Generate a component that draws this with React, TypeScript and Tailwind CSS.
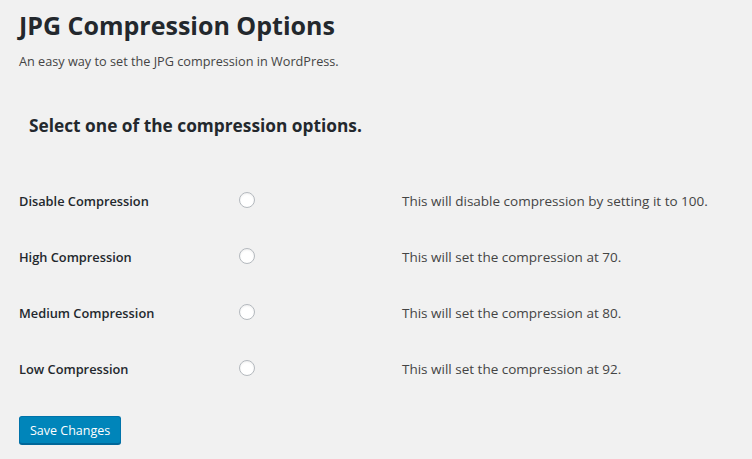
import React from "react";

const options = [
  { label: "Disable Compression", note: "This will disable compression by setting it to 100." },
  { label: "High Compression", note: "This will set the compression at 70." },
  { label: "Medium Compression", note: "This will set the compression at 80." },
  { label: "Low Compression", note: "This will set the compression at 92." },
];

const App: React.FC = () => {
  return (
    <div
      className="min-h-[459px] w-[752px] bg-[#f1f1f1] px-[19px] pt-[7px] text-[#23282d]"
      style={{ fontFamily: '"Open Sans", "Noto Sans", sans-serif' }}
    >
      {/* Page title */}
      <h1 className="text-[25px] font-bold leading-[36px]">JPG Compression Options</h1>
      <p className="mt-[9px] text-[12.7px] leading-[18px] text-[#444]">
        An easy way to set the JPG compression in WordPress.
      </p>

      {/* Section heading */}
      <h2 className="mt-[44px] pl-[10px] text-[17.3px] font-bold leading-[24px]">
        Select one of the compression options.
      </h2>

      {/* Options table */}
      <div className="mt-[53px] flex flex-col gap-[36px]">
        {options.map((opt) => (
          <div key={opt.label} className="grid h-[20px] grid-cols-[220px_163px_1fr] items-center">
            <span className="text-[12.8px] font-semibold text-[#23282d]">{opt.label}</span>
            <span className="-mt-[3px] block h-4 w-4 rounded-full border border-[#b4b9be] bg-white shadow-[inset_0_1px_2px_rgba(0,0,0,0.07)]" />
            <span className="text-[13.5px] text-[#444]">{opt.note}</span>
          </div>
        ))}
      </div>

      {/* Submit */}
      <button className="mt-[37px] h-[28px] rounded-[3px] border border-[#0073aa] border-b-[#006799] bg-[#0085ba] px-[10px] text-[12.5px] leading-[27px] text-white shadow-[0_1px_0_#006799]">
        Save Changes
      </button>
    </div>
  );
};

export default App;
